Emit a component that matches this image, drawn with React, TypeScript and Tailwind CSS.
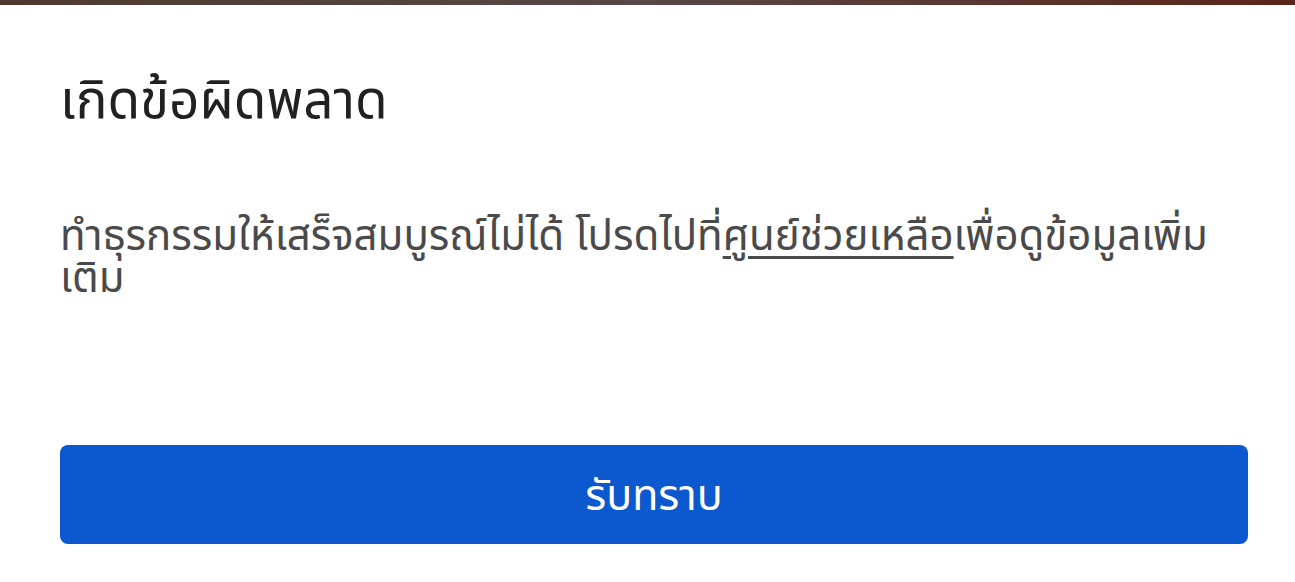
export default function App() {
  return (
    <div
      className="w-[1295px] h-[582px] bg-white flex flex-col overflow-hidden"
      style={{ fontFamily: '"Noto Sans", "Noto Sans Thai", sans-serif' }}
    >
      {/* backdrop strip */}
      <div className="h-[5px] w-full bg-gradient-to-r from-[#4e3a2e] via-[#574746] to-[#5b2418]" />

      <div className="flex flex-col pl-[60px] pr-[47px] flex-1">
        <h1 className="mt-[61px] text-[53px] leading-[64px] text-[#212121] font-normal">
          เกิดข้อผิดพลาด
        </h1>

        <p className="mt-[83px] text-[42px] leading-[42px] text-[#4a4a4a]">
          <span>ทำธุรกรรมให้เสร็จสมบูรณ์ไม่ได้ โปรดไปที่</span>
          <a className="underline decoration-[3px] underline-offset-[6px] text-[#4a4a4a]">ศูนย์ช่วยเหลือ</a>
          <span>เพื่อดูข้อมูลเพิ่ม</span>
          <br />
          <span>เติม</span>
        </p>

        <button className="mt-auto mb-[38px] h-[99px] w-full rounded-[8px] bg-[#0b58cf] text-white text-[43px]">
          รับทราบ
        </button>
      </div>
    </div>
  );
}
